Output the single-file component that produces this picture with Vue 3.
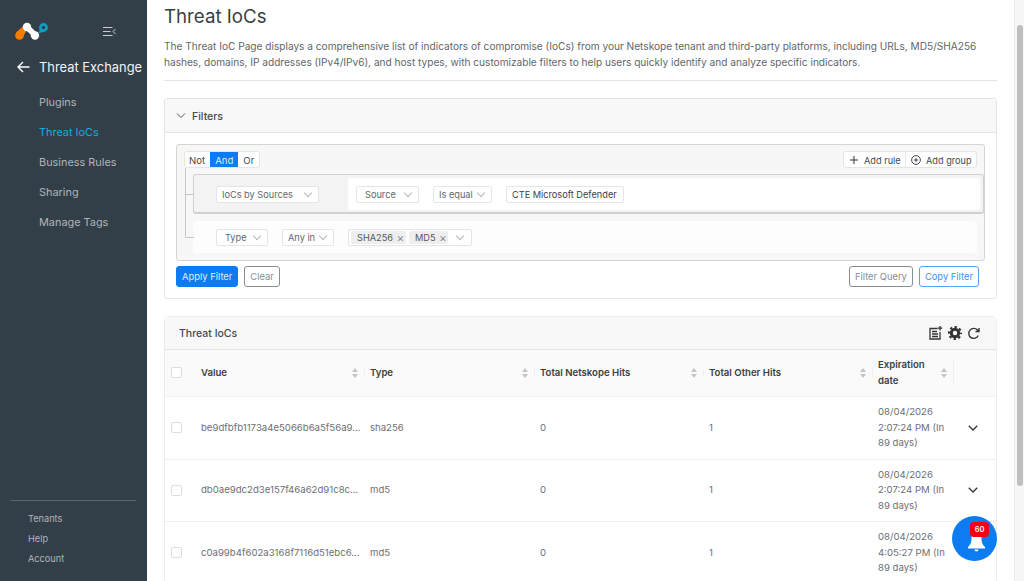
<template>
  <div class="app">
    <aside class="sidebar">
      <div class="brand">
        <svg class="logo" width="36" height="22" viewBox="0 0 36 22">
          <path d="M2 12.500L10 5.500L13 9.500L8.500 18z" fill="#f57c00" />
          <circle cx="5.500" cy="15.500" r="4.300" fill="#f57c00" />
          <path d="M13 7L21 15" stroke="#fff" stroke-width="5.500" />
          <circle cx="13" cy="7" r="4.200" fill="#fff" />
          <circle cx="21" cy="15.500" r="4.200" fill="#fff" />
          <path d="M24.500 13.500L26.500 7L32 11z" fill="#0f9ec2" />
          <circle cx="29.500" cy="7.500" r="3.100" fill="#323f48" stroke="#0f9ec2" stroke-width="2.600" />
        </svg>
        <svg class="collapse" width="13" height="9" viewBox="0 0 13 9" fill="none" stroke="#c8cdd1" stroke-width="1">
          <path d="M0 .5h9.500M0 4.500h7.500M0 8.500h9.500M12.500 2L10 4.500L12.500 7" />
        </svg>
      </div>
      <div class="section">
        <svg width="13" height="12" viewBox="0 0 13 12" fill="none" stroke="#fff" stroke-width="1.400">
          <path d="M12.500 6H1M6 1L1 6L6 11" />
        </svg>
        <span>Threat Exchange</span>
      </div>
      <nav class="nav">
        <a v-for="item in navItems" :key="item" :class="{ active: item === 'Threat IoCs' }">{{ item }}</a>
      </nav>
      <div class="side-foot">
        <a v-for="item in footItems" :key="item">{{ item }}</a>
      </div>
    </aside>

    <main class="main">
      <h1>Threat IoCs</h1>
      <p class="desc">
        The Threat IoC Page displays a comprehensive list of indicators of compromise (IoCs) from your Netskope tenant and third-party platforms, including URLs, MD5/SHA256 hashes, domains, IP addresses (IPv4/IPv6), and host types, with customizable filters to help users quickly identify and analyze specific indicators.
      </p>
      <hr />

      <section class="card filters">
        <header class="card-head">
          <svg width="10" height="6" viewBox="0 0 10 6" fill="none" stroke="#555" stroke-width="1"><path d="M1 .5l4 4 4-4" /></svg>
          <span>Filters</span>
        </header>
        <div class="filter-body">
          <div class="query">
            <div class="query-top">
              <div class="btn-group">
                <button>Not</button>
                <button class="on">And</button>
                <button>Or</button>
              </div>
              <div class="btn-group add">
                <button>
                  <svg width="8" height="8" viewBox="0 0 8 8" stroke="#333" fill="none"><path d="M4 0v8M0 4h8" /></svg>
                  <span>Add rule</span>
                </button>
                <button>
                  <svg width="10" height="10" viewBox="0 0 10 10" stroke="#333" fill="none" stroke-width=".9"><circle cx="5" cy="5" r="4.400" /><path d="M5 2.800v4.400M2.800 5h4.400" /></svg>
                  <span>Add group</span>
                </button>
              </div>
            </div>
            <div class="rules">
              <div class="rule rule-group">
                <div class="rule-left">
                  <span class="select w-sources">IoCs by Sources<i class="chev"></i></span>
                </div>
                <div class="rule-right">
                  <span class="select w-source">Source<i class="chev"></i></span>
                  <span class="select w-equal">Is equal<i class="chev"></i></span>
                  <span class="value">CTE Microsoft Defender</span>
                </div>
              </div>
              <div class="rule rule-plain">
                <span class="select w-type">Type<i class="chev"></i></span>
                <span class="select w-any">Any in<i class="chev"></i></span>
                <span class="multi">
                  <span class="tag">SHA256<b>×</b></span>
                  <span class="tag">MD5<b>×</b></span>
                  <i class="chev"></i>
                </span>
              </div>
            </div>
          </div>
          <div class="actions">
            <button class="btn primary">Apply Filter</button>
            <button class="btn grey">Clear</button>
            <span class="spacer"></span>
            <button class="btn grey">Filter Query</button>
            <button class="btn blue">Copy Filter</button>
          </div>
        </div>
      </section>

      <section class="card iocs">
        <header class="card-head table-head">
          <span>Threat IoCs</span>
          <div class="tools">
            <svg width="14" height="14" viewBox="0 0 14 14" fill="none" stroke="#333" stroke-width="1.300">
              <path d="M8.500 2.500H1v10.500h10V6M3 5.500h5M3 8h6M3 10.500h6M11 0v4.500M8.800 2.200h4.400" />
            </svg>
            <svg width="14" height="14" viewBox="0 0 14 14" fill="none" stroke="#333">
              <circle cx="7" cy="7" r="3.700" stroke-width="3" />
              <circle cx="7" cy="7" r="6" stroke-width="2" stroke-dasharray="2.400 2.312" stroke-dashoffset="1.200" />
            </svg>
            <svg width="13" height="13" viewBox="0 0 13 13" fill="none" stroke="#333" stroke-width="1.400">
              <path d="M11.300 8.500A5 5 0 1 1 10.500 3L12 4.500M12 1v3.500H8.500" />
            </svg>
          </div>
        </header>
        <table>
          <colgroup>
            <col class="c-check" /><col class="c-value" /><col class="c-type" /><col class="c-hits" /><col class="c-other" /><col class="c-exp" /><col class="c-more" />
          </colgroup>
          <thead>
            <tr>
              <th><span class="check"></span></th>
              <th v-for="col in columns" :key="col">
                <div class="th-inner"><span>{{ col }}</span><i class="sort"></i></div>
              </th>
              <th></th>
            </tr>
          </thead>
          <tbody>
            <tr v-for="row in rows" :key="row.value">
              <td><span class="check"></span></td>
              <td>{{ row.value }}</td>
              <td>{{ row.type }}</td>
              <td>0</td>
              <td>1</td>
              <td class="exp">{{ row.exp }}</td>
              <td class="more">
                <svg v-if="row.more" width="10" height="6" viewBox="0 0 10 6" fill="none" stroke="#333" stroke-width="1.300"><path d="M.8.800L5 5l4.200-4.200" /></svg>
              </td>
            </tr>
          </tbody>
        </table>
      </section>
    </main>

    <div class="scrollbar"><div class="thumb"></div></div>

    <button class="bell">
      <svg width="17" height="20" viewBox="0 0 17 20" fill="#fff">
        <path d="M8.500 0C5.500 0 3.500 2.500 3.500 6c0 4.500-1 6.500-3.500 9v1.500h17V15c-2.500-2.500-3.500-4.500-3.500-9 0-3.500-2-6-5-6z" />
        <path d="M6.500 17.500h4a2 2 0 0 1-4 0z" />
      </svg>
      <span class="badge">60</span>
    </button>
  </div>
</template>

<script setup>
const navItems = ['Plugins', 'Threat IoCs', 'Business Rules', 'Sharing', 'Manage Tags']
const footItems = ['Tenants', 'Help', 'Account']
const columns = ['Value', 'Type', 'Total Netskope Hits', 'Total Other Hits', 'Expiration date']

const rows = [
  { value: 'be9dfbfb1173a4e5066b6a5f56a9...', type: 'sha256', exp: '08/04/2026 2:07:24 PM (In 89 days)', more: true },
  { value: 'db0ae9dc2d3e157f46a62d91c8c...', type: 'md5', exp: '08/04/2026 2:07:24 PM (In 89 days)', more: true },
  { value: 'c0a99b4f602a3168f7116d51ebc6...', type: 'md5', exp: '08/04/2026 4:05:27 PM (In 89 days)', more: false }
]
</script>

<style>
html, body {
  margin: 0;
  height: 100%;
  overflow: hidden;
}
</style>

<style scoped>
.app {
  display: flex;
  width: 1024px;
  height: 581px;
  overflow: hidden;
  position: relative;
  font-family: Inter, "Liberation Sans", sans-serif;
  color: #4a4f55;
  background: #fff;
}

.sidebar {
  width: 147px;
  flex: none;
  background: #323f48;
  display: flex;
  flex-direction: column;
  color: #b0b4b8;
}

.brand {
  display: flex;
  align-items: center;
  height: 22px;
  margin-top: 20px;
  padding-left: 14px;
}

.collapse {
  margin-left: 53px;
  margin-top: 1px;
}

.section {
  display: flex;
  align-items: center;
  gap: 9px;
  margin-top: 15px;
  padding-left: 17px;
  height: 20px;
  color: #f2f3f4;
  font-size: 12.900px;
  white-space: nowrap;
}

.nav {
  display: flex;
  flex-direction: column;
  margin-top: 10px;
  padding-left: 39px;
  font-size: 10.900px;
}

.nav a {
  height: 30px;
  line-height: 30px;
}

.nav a.active {
  color: #1fa8dc;
}

.side-foot {
  margin: auto 11px 0;
  padding: 8px 0 12px 17px;
  border-top: 1px solid #5d676f;
  display: flex;
  flex-direction: column;
  font-size: 9.200px;
}

.side-foot a {
  height: 20px;
  line-height: 20px;
}

.main {
  flex: 1;
  min-width: 0;
  padding: 0 27px 0 17px;
}

h1 {
  margin: 5px 0 0;
  font-size: 18.700px;
  font-weight: 400;
  line-height: 24px;
  color: #3a3f44;
}

.desc {
  margin: 9px 0 0;
  font-size: 10.120px;
  line-height: 16px;
  color: #62676c;
}

hr {
  border: 0;
  border-top: 1px solid #e2e3e4;
  margin: 10px 0 17px;
}

.card {
  border: 1px solid #e4e5e6;
  border-radius: 3px;
  background: #fff;
}

.card-head {
  display: flex;
  align-items: center;
  height: 32px;
  background: #f8f8f8;
  border-bottom: 1px solid #e4e5e6;
  padding: 1px 11px 0;
  gap: 6px;
  font-size: 10.500px;
  font-weight: 500;
  color: #44494e;
}

.filter-body {
  padding: 11px;
}

.query {
  height: 117px;
  border: 1px solid #d4d5d6;
  border-radius: 3px;
  background: #f7f7f7;
  box-sizing: border-box;
  padding: 6px 7px 0;
  position: relative;
}

.query-top {
  display: flex;
  justify-content: space-between;
}

.btn-group {
  display: flex;
  border: 1px solid #e4e5e6;
  border-radius: 3px;
  background: #fff;
  height: 15px;
}

.btn-group button {
  border: 0;
  background: none;
  padding: 1px 5px 0;
  font: 9.600px Inter, sans-serif;
  color: #44494e;
  display: flex;
  align-items: center;
  gap: 6px;
}

.btn-group button:first-child {
  padding-left: 4px;
}

.btn-group button.on {
  background: #0d7bf2;
  color: #dfeeff;
}

.btn-group.add button {
  width: 61px;
  box-sizing: border-box;
  padding: 1px 0 0 6px;
  font-size: 9.200px;
}

.btn-group.add button + button {
  width: 71px;
  padding-left: 5px;
  gap: 5px;
  border-left: 1px solid #e4e5e6;
}

.rules {
  margin-top: 6px;
  margin-left: 1px;
  position: relative;
}

.rules::before {
  content: "";
  position: absolute;
  left: 0;
  top: -6px;
  width: 8px;
  height: 69px;
  border: solid #c5c6c7;
  border-width: 0 0 1px 1px;
  border-radius: 0 0 0 2px;
}

.rules::after {
  content: "";
  position: absolute;
  left: 0;
  top: 20px;
  width: 8px;
  border-top: 1px solid #c5c6c7;
}

.rule {
  display: flex;
  align-items: center;
  margin-left: 8px;
  font-size: 10px;
}

.rule-group {
  height: 40px;
  box-sizing: border-box;
  border: 1px solid #cfd0d1;
  border-bottom-width: 2px;
  border-radius: 3px;
  background: #f3f3f3;
  padding-left: 22px;
  margin-right: -7px;
}

.rule-left {
  width: 132px;
  flex: none;
  padding-top: 1px;
}

.rule-right {
  flex: 1;
  align-self: stretch;
  margin: 3px 3px 2px 0;
  background: #fff;
  border-radius: 2px;
  display: flex;
  align-items: center;
  padding-left: 8px;
  gap: 14px;
}

.rule-plain {
  height: 32px;
  margin-top: 7px;
  background: #fdfdfd;
  border-radius: 3px;
  padding-left: 23px;
}

.select, .value, .multi {
  display: inline-flex;
  align-items: center;
  box-sizing: border-box;
  height: 17px;
  border: 1px solid #e4e5e6;
  border-radius: 2px;
  background: #fff;
  padding: 0 5px;
  color: #62676c;
  white-space: nowrap;
  font-size: 9.200px;
}

.value {
  color: #3a3f44;
  width: 118px;
}

.w-sources { width: 103px; }
.w-source { width: 63px; padding-left: 8px; }
.w-equal { width: 59px; }
.w-type { width: 52px; padding-left: 8px; margin-right: 14px; }
.w-any { width: 52px; margin-right: 14px; }

.chev {
  width: 6px;
  height: 6px;
  border: solid #b5b8ba;
  border-width: 0 1px 1px 0;
  box-sizing: border-box;
  transform: rotate(45deg);
  margin-left: auto;
  margin-right: 2px;
  margin-top: -3px;
}

.multi {
  width: 124px;
  padding: 0 3px 0 2px;
  gap: 3px;
}

.multi .chev {
  margin-right: 5px;
}

.tag {
  background: #eeeeee;
  border-radius: 2px;
  padding: 0 0 0 6px;
  height: 13px;
  line-height: 13px;
  color: #55595e;
  display: inline-flex;
  gap: 2px;
}

.tag b {
  font-weight: 300;
  font-size: 12px;
  width: 11px;
  text-align: center;
  color: #777;
}

.actions {
  display: flex;
  gap: 6px;
  margin-top: 5px;
}

.spacer {
  flex: 1;
}

.btn {
  height: 21px;
  padding: 0 5px;
  border-radius: 3px;
  font: 9.400px Inter, sans-serif;
  background: #fff;
  box-sizing: border-box;
}

.btn.primary {
  background: #0d7bf2;
  border: 1px solid #0d7bf2;
  color: #dfeeff;
}

.btn.grey {
  border: 1px solid #868e96;
  color: #868e96;
}

.btn.blue {
  border: 1px solid #5aa2f7;
  color: #3d8ff0;
  margin-right: 6px;
}

.iocs {
  margin-top: 17px;
  border-color: #eceded;
  border-radius: 5px 5px 0 0;
}

.table-head {
  justify-content: space-between;
  padding: 0 16px 0 14px;
}

.tools {
  display: flex;
  align-items: center;
  gap: 5px;
}

table {
  width: 100%;
  table-layout: fixed;
  border-collapse: collapse;
  font-size: 9.600px;
}

.c-check { width: 31px; }
.c-value { width: 169px; }
.c-type { width: 170px; }
.c-hits { width: 169px; }
.c-other { width: 169px; }
.c-exp { width: 81px; }

thead tr {
  height: 46px;
  background: #fafafa;
}

th {
  text-align: left;
  font-weight: 600;
  padding: 0;
  color: #3a3f44;
  line-height: 15.500px;
}

th:first-child, td:first-child {
  padding-left: 6px;
}

.th-inner {
  display: flex;
  align-items: center;
  justify-content: space-between;
  padding: 0 4px 0 5px;
  position: relative;
}

.th-inner::after {
  content: "";
  position: absolute;
  right: 0;
  top: 4px;
  bottom: 4px;
  width: 1px;
  background: #efefef;
}

.sort {
  position: relative;
  width: 6px;
  height: 10px;
  flex: none;
  margin-right: 3px;
  margin-left: 4px;
}

.sort::before, .sort::after {
  content: "";
  position: absolute;
  left: 0;
  border: 3px solid transparent;
}

.sort::before {
  top: -3px;
  border-bottom: 4px solid #c2c4c6;
}

.sort::after {
  bottom: -3px;
  border-top: 4px solid #c2c4c6;
}

.check {
  display: block;
  width: 9px;
  height: 9px;
  border: 1px solid #dcdddd;
  border-radius: 2px;
  background: #fff;
}

tbody tr {
  height: 62px;
  border-top: 1px solid #eeeeee;
}

tbody tr:first-child {
  height: 63px;
  border-top: 1px solid #f3f3f3;
}

td {
  padding: 0 5px;
  color: #6c7075;
  line-height: 15.500px;
  overflow: hidden;
}

td:nth-child(2) {
  white-space: nowrap;
}

td.exp {
  padding-right: 8px;
}

.more {
  text-align: center;
  padding-right: 10px;
}

.scrollbar {
  position: absolute;
  top: 0;
  right: 0;
  bottom: 0;
  width: 10px;
  background: #f7f7f7;
  border-left: 1px solid #e9e9e9;
  box-sizing: border-box;
}

.thumb {
  position: absolute;
  top: 25px;
  left: 2px;
  width: 6px;
  height: 461px;
  border-radius: 3px;
  background: #bfbfbf;
}

.bell {
  position: absolute;
  left: 952px;
  top: 516px;
  width: 45px;
  height: 45px;
  padding: 0;
  border: 0;
  border-radius: 50%;
  background: #0d7bf2;
  display: flex;
  align-items: center;
  justify-content: center;
}

.bell svg {
  margin-top: 7px;
  margin-left: 4px;
}

.badge {
  position: absolute;
  top: 6px;
  left: 18px;
  width: 19px;
  height: 15px;
  border-radius: 4px;
  background: #f50012;
  color: #fff;
  font: 600 7.500px/15px Inter, sans-serif;
  text-align: center;
}
</style>
